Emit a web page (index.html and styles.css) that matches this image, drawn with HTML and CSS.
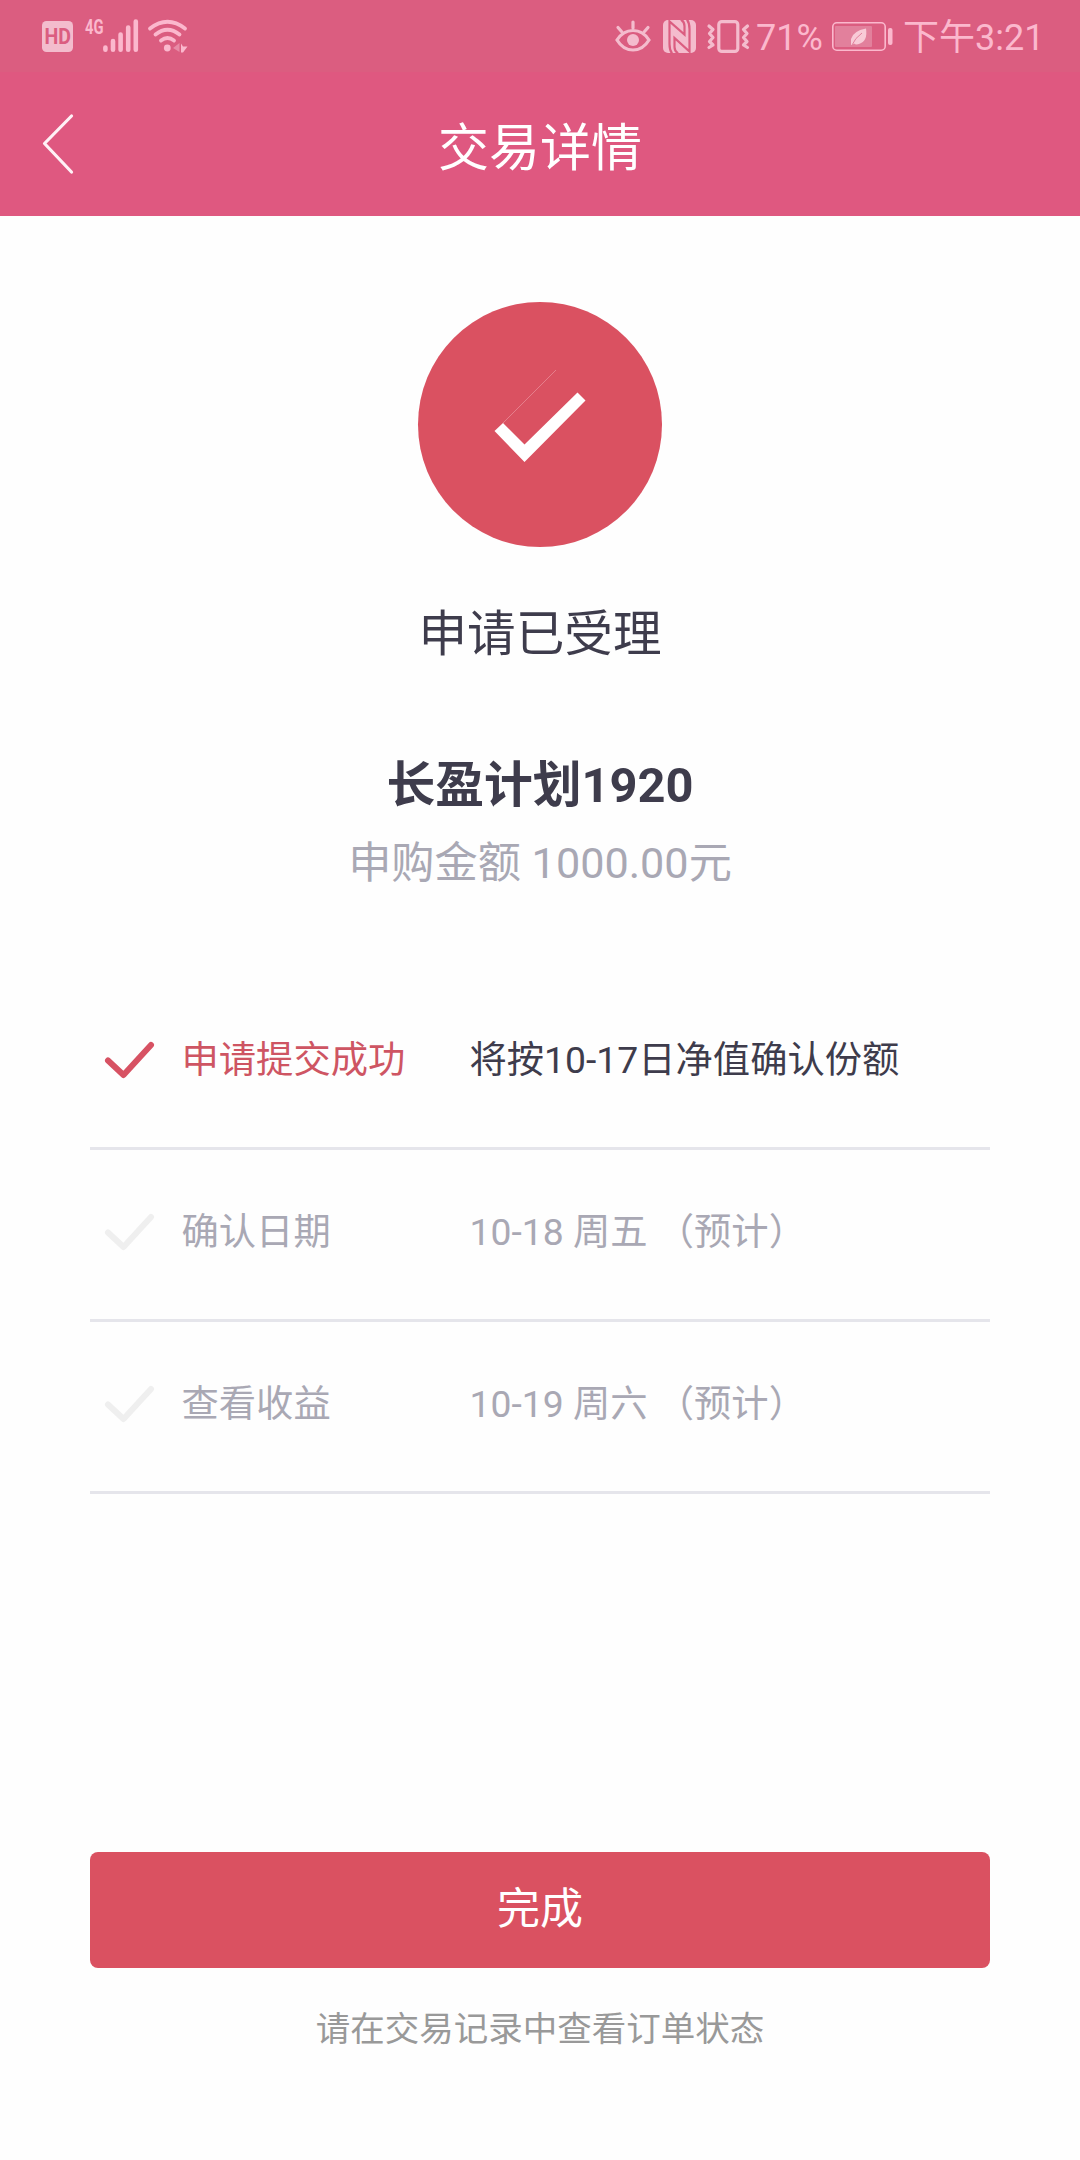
FILE: index.html
```
<!DOCTYPE html>
<html lang="zh-CN">
<head>
    <meta charset="UTF-8">
    <meta name="viewport" content="width=device-width, initial-scale=1.0">
    <title>交易详情</title>
    <link rel="stylesheet" href="styles.css">
</head>
<body>
    <!-- Status Bar -->
    <div class="status-bar">
        <div class="status-left">
            <svg class="icon-hd" width="32" height="32" viewBox="0 0 32 32">
                <rect x="0" y="0" width="31" height="31" rx="4.5" fill="#f3bccd"/>
                <text x="2.5" y="23" textLength="26.5" lengthAdjust="spacingAndGlyphs" class="hd-text">HD</text>
            </svg>
            <svg class="icon-signal" width="54" height="34" viewBox="0 0 54 34">
                <text x="0" y="15" textLength="18.5" lengthAdjust="spacingAndGlyphs" class="net-text">4G</text>
                <g stroke="#fbb8cd" stroke-width="4.6" stroke-linecap="round">
                    <path d="M20.4 28.5v2.3M28 22v8.8M35.6 15.5v15.3M43.2 8.5v22.3M50.8 2.5v28.3"/>
                </g>
            </svg>
            <svg class="icon-wifi" width="40" height="34" viewBox="0 0 40 34">
                <g fill="none" stroke="#fbb8cd" stroke-width="3.8" stroke-linecap="round">
                    <path d="M2 9.5Q19.5-4 37 9.5"/>
                    <path d="M7.5 15.5Q19.5 6 31.5 15.5"/>
                    <path d="M13 21.5Q19.5 16.5 26 21.5"/>
                </g>
                <circle cx="19.3" cy="29" r="3.4" fill="#fbb8cd"/>
                <path d="M25 29l6.5-5v9z" fill="#e88ba6"/>
                <path d="M33 24.5l2 3h4.5l-4.5 6h-2z" fill="#fbb8cd"/>
            </svg>
        </div>
        <div class="status-right">
            <svg class="icon-eye" width="36" height="32" viewBox="0 0 36 32">
                <g fill="none" stroke="#f4bccd" stroke-width="3.2" stroke-linecap="round">
                    <path d="M2 20Q8 10.500 18 10.500T34 20Q28 30 18 30T2 20z"/>
                    <path d="M18 2v6M3 7.500l3.5 4M33 7.500l-3.5 4"/>
                </g>
                <circle cx="18" cy="20" r="6" fill="#f4bccd"/>
            </svg>
            <svg class="icon-nfc" width="33" height="33" viewBox="0 0 33 33">
                <rect width="33" height="33" rx="5" fill="#f4bccd"/>
                <g fill="none" stroke="#db5d80" stroke-width="2.2">
                    <path d="M9 33.5Q6.5 30 6.5 24V1.500L21.5 14.5V6Q21.5 2 18-.5"/>
                    <path d="M24-.5Q26.5 3 26.5 9V31.5L11.5 18V27Q11.5 31 15 33.5"/>
                </g>
            </svg>
            <svg class="icon-vibrate" width="43" height="33" viewBox="0 0 43 33">
                <g fill="none" stroke="#f4bccd" stroke-width="3.2">
                    <rect x="11.8" y="1.6" width="19" height="29.8" rx="3"/>
                    <path stroke-linejoin="round" stroke-linecap="round" d="M2 6l4 3.5-3.5 4 3.5 4-3.5 4 3.5 3.5-4 2.5M40.5 6l-4 3.5 3.5 4-3.5 4 3.5 4-3.5 3.5 4 2.5"/>
                </g>
            </svg>
            <span class="percent">71%</span>
            <svg class="icon-battery" width="62" height="29" viewBox="0 0 62 29">
                <rect x=".8" y=".8" width="52.4" height="27.4" rx="4" fill="none" stroke="#fbb8cd" stroke-width="1.6"/>
                <rect x="3" y="4" width="37" height="21" rx="1" fill="#e2809c"/>
                <path d="M19 23V17Q21 9 34 6.5Q36 19 27 22Q24 23 22 21.5L20 23z" fill="#f8cad7"/>
                <path d="M20 23Q23 16 30 11" fill="none" stroke="#e2809c" stroke-width="1"/>
                <rect x="56" y="6" width="4.5" height="17" rx="2" fill="#fbb8cd"/>
            </svg>
            <span class="time">下午3:21</span>
        </div>
    </div>

    <!-- Header -->
    <header class="header">
        <svg class="back" width="33" height="60" viewBox="0 0 33 60">
            <path d="M29.5 2L2.5 29.5L29.5 58" fill="none" stroke="#fff1f6" stroke-width="3.2" stroke-linecap="round" stroke-linejoin="round"/>
        </svg>
        <h1 class="title">交易详情</h1>
    </header>

    <main class="container">
        <!-- Result -->
        <svg class="result-icon" width="244" height="245" viewBox="0 0 244 245">
            <ellipse cx="122" cy="122.5" rx="122" ry="122.5" fill="#da5161"/>
            <path d="M85 121L138 68" stroke="#e88a95" stroke-width=".8"/>
            <path d="M76.5 129L85 121L106.5 142.5L159.5 90.5L167.5 98.5L106.5 160z" fill="#fff"/>
        </svg>
        <div class="result-text">申请已受理</div>
        <div class="product">长盈计划1920</div>
        <div class="amount">申购金额 1000.00元</div>

        <!-- Steps -->
        <ul class="steps">
            <li class="step active">
                <svg class="check" width="50" height="38" viewBox="0 0 50 38"><path d="M3 18.5L18.5 33L46 3"/></svg>
                <span class="step-name">申请提交成功</span>
                <span class="step-info">将按10-17日净值确认份额</span>
            </li>
            <li class="step">
                <svg class="check" width="50" height="38" viewBox="0 0 50 38"><path d="M3 18.5L18.5 33L46 3"/></svg>
                <span class="step-name">确认日期</span>
                <span class="step-info">10-18 周五 （预计）</span>
            </li>
            <li class="step">
                <svg class="check" width="50" height="38" viewBox="0 0 50 38"><path d="M3 18.5L18.5 33L46 3"/></svg>
                <span class="step-name">查看收益</span>
                <span class="step-info">10-19 周六 （预计）</span>
            </li>
        </ul>

        <button class="done" type="button">完成</button>
        <p class="hint">请在交易记录中查看订单状态</p>
    </main>
</body>
</html>
```
FILE: styles.css
```
* {
    box-sizing: border-box;
}

body {
    margin: 0;
    padding: 0;
    height: 2160px;
    background-color: #fefefe;
    font-family: Roboto, 'Noto Sans CJK SC', sans-serif;
    color: #3e3c4c;
}

svg {
    display: block;
    flex-shrink: 0;
    overflow: visible;
}

/* status bar */
.status-bar {
    display: flex;
    justify-content: space-between;
    height: 72px;
    padding: 0 39px 0 42px;
    background-color: #db5d80;
    color: #fbb8cd;
}

.status-left, .status-right {
    display: flex;
    align-items: flex-start;
}

.icon-hd {
    margin-top: 21px;
}

.icon-signal {
    margin: 19px 0 0 11px;
}

.icon-wifi {
    margin: 19px 0 0 9px;
}

.hd-text {
    font-size: 22px;
    font-weight: 700;
    fill: #db5d80;
}

.net-text {
    font-size: 20px;
    font-weight: 700;
    fill: #fbb8cd;
}

.icon-eye {
    margin-top: 20px;
}

.icon-nfc {
    margin: 20px 0 0 12px;
}

.icon-vibrate {
    margin: 20px 0 0 11px;
}

.percent, .time {
    font-size: 36px;
    line-height: 76px;
    white-space: nowrap;
}

.percent {
    width: 76px;
    margin-left: 6px;
}

.icon-battery {
    margin-top: 22px;
}

.time {
    width: 138px;
    margin-left: 9px;
}

/* header */
.header {
    display: grid;
    grid-template-columns: 42px 1fr 42px;
    height: 144px;
    padding: 0 42px;
    background-color: #df5880;
}

.back {
    margin-top: 42px;
}

.title {
    margin: 0;
    font-size: 51px;
    font-weight: 400;
    line-height: 153px;
    text-align: center;
    color: #fff;
}

/* content */
.container {
    display: flex;
    flex-direction: column;
    align-items: center;
    padding: 86px 90px 0;
}

.result-text {
    margin-top: 53px;
    font-size: 48.6px;
    line-height: 70px;
}

.product {
    margin-top: 81px;
    font-size: 48.8px;
    font-weight: 700;
    line-height: 70px;
}

.amount {
    margin-top: 13px;
    font-size: 43.2px;
    line-height: 60px;
    color: #a9a8b4;
}

.steps {
    width: 100%;
    margin: 84px 0 0;
    padding: 0;
    list-style: none;
}

.step {
    display: grid;
    grid-template-columns: 77px 288px 1fr;
    height: 172px;
    padding: 54px 0 0 14.5px;
    border-bottom: 3px solid #e5e5eb;
    font-size: 37.3px;
    line-height: 56px;
    white-space: nowrap;
    color: #a9a8b4;
}

.check {
    margin-top: 10px;
}

.check path {
    fill: none;
    stroke: #efefef;
    stroke-width: 6;
    stroke-linecap: round;
    stroke-linejoin: round;
}

.active .check path {
    stroke: #d75263;
}

.active .step-name {
    color: #ce5563;
}

.active .step-info {
    color: #3e3c4c;
}

.done {
    width: 100%;
    height: 116px;
    margin-top: 358px;
    padding: 0 0 10px;
    border: none;
    border-radius: 8px;
    background-color: #da5161;
    color: #fff;
    font-family: inherit;
    font-size: 43px;
}

.hint {
    margin: 36px 0 0;
    font-size: 34.5px;
    line-height: 50px;
    color: #999;
}
```
